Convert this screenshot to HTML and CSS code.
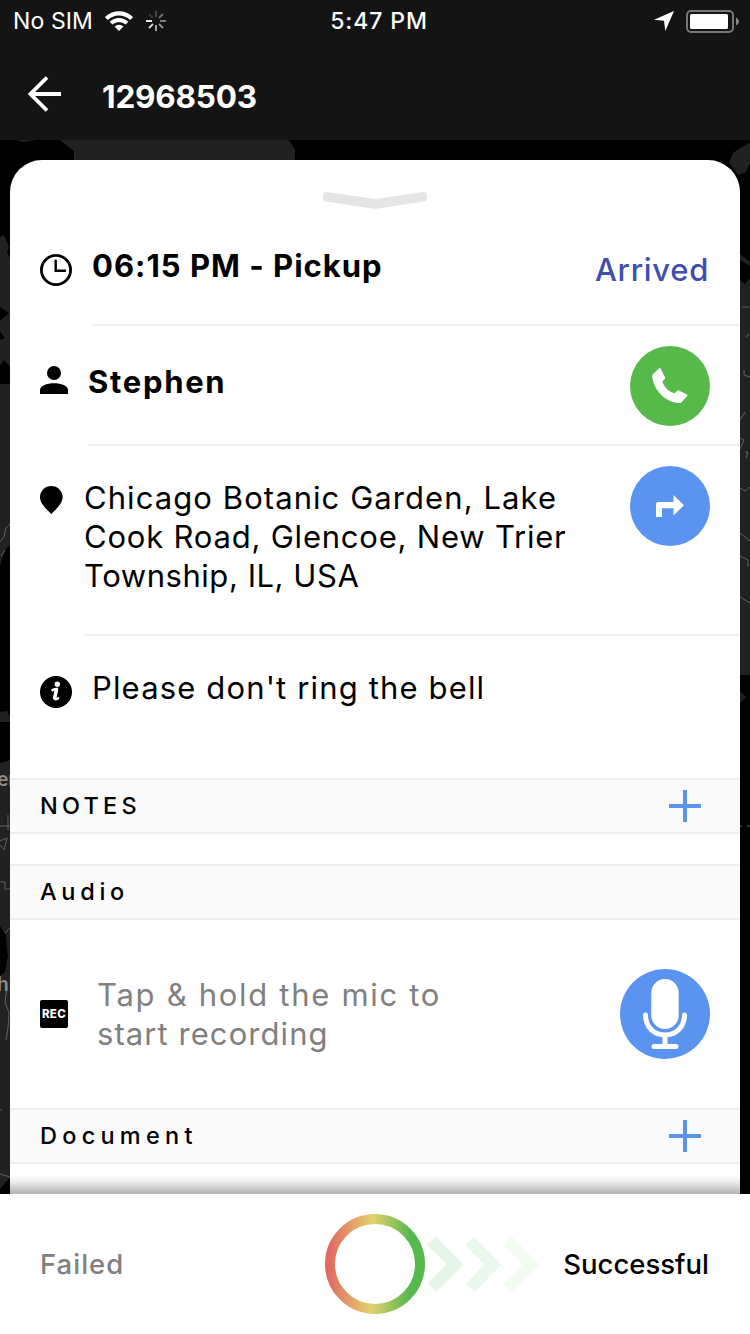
FILE: index.html
```html
<!DOCTYPE html>
<html lang="en">
<head>
<meta charset="utf-8">
<title>Pickup 12968503</title>
<link rel="stylesheet" href="styles.css">
</head>
<body>
<div class="screen">
  <header class="top">
    <div class="status">
      <div class="status-left">
        <span class="carrier">No SIM</span>
        <svg class="wifi" width="28" height="20" viewBox="0 0 28 20"><g fill="none" stroke="#fff" stroke-width="4"><path d="M1.400 7.600A17.800 17.800 0 0 1 26.600 7.600" stroke-width="4.200"/><path d="M6 12.200A11.300 11.300 0 0 1 22 12.200"/></g><path d="M14 20L9.600 15.600A6.200 6.200 0 0 1 18.400 15.600Z" fill="#fff"/></svg>
        <svg class="spinner" width="20" height="20" viewBox="-10 -10 20 20"><g stroke="#fff" stroke-width="1.800"><path d="M-4-0H-10"/><path d="M-3 3L-7 7" opacity=".85"/><path d="M0 4V10" opacity=".7"/><path d="M3 3L7 7" opacity=".55"/><path d="M4 0H10" opacity=".5"/><path d="M3-3L7-7" opacity=".4"/><path d="M0-4V-10" opacity=".25"/><path d="M-3-3L-7-7" opacity=".15"/></g></svg>
      </div>
      <span class="clock">5:47 PM</span>
      <div class="status-right">
        <svg width="20" height="20" viewBox="0 0 20 20"><path d="M20 0L11.300 20L10 9.800L0 8.700Z" fill="#fff"/></svg>
        <svg width="53" height="23" viewBox="0 0 53 23"><rect x="1" y="1" width="46" height="21" rx="4" fill="none" stroke="#777" stroke-width="2"/><rect x="4" y="4" width="38" height="15" rx="1.500" fill="#fff"/><path d="M50 7.500Q53 9 53 11.500T50 15.500Z" fill="#888"/></svg>
      </div>
    </div>
    <div class="navbar">
      <svg width="34" height="36" viewBox="0 0 34 36"><path d="M33 18H3M19 1.500L2.500 18L19 34.500" fill="none" stroke="#fff" stroke-width="3.800"/></svg>
      <h1 class="title">12968503</h1>
    </div>
  </header>

  <main class="stage">
    <svg class="map" width="750" height="1054" viewBox="0 140 750 1054">
      <rect y="140" width="750" height="1054" fill="#000"/>
      <g fill="#212121">
        <path d="M60 140L74 151V162H295V150L289 140ZM17 140L22 142L36 140Z"/>
        <path d="M750 143L742 147L733 153L729 162L738 175L746 172L750 163Z"/>
        <path d="M0 237L4 235L9 247L7 252L10 258V366L4 360L0 365V340L5 338L0 331V321L9 313L0 307ZM0 384H10V545L5 550L0 566ZM0 712L7 711L10 717V722H0ZM0 763L10 760V965L7 950L6 935L0 926ZM0 976L5 972L8 955L10 960V1178L4 1184L0 1189Z"/>
        <path d="M740 254L750 262V266L740 260ZM740 280L745 284L750 278V675H740ZM740 691L746 697L740 703Z"/>
      </g>
      <path d="M0 542L4 537L6 528L10 524M1 556L5 550M0 826H10M8 815V830M0 841L7 838L4 850L0 845M0 882H5V889H10M10 928L5 933M7 987L5 1002L9 1013L8 1028L6 1040M0 1110H2M0 1174L10 1177M742 307H749M749 334L746 338M744 370V375L750 377M740 420L745 412M740 438L744 440L740 449M745 452H748L746 458M740 488L745 491L750 487M740 533L750 541M740 556L748 560V567M740 597L750 603M740 826H742M747 826H750" fill="none" stroke="#626262"/>
      <g class="map-label" fill="#8b8b8b"><text x="-3" y="786">er</text><text x="-3" y="991">hi</text></g>
    </svg>

    <section class="sheet">
      <div class="handle"><svg width="106" height="18" viewBox="0 0 106 18"><path d="M4 1Q1 1 1 4V8Q1 10 4 10.500L53 18L102 10.500Q105 10 105 8V4Q105 1 102 1L53 8Z" fill="#e5e5e5"/></svg></div>

      <div class="row">
        <svg class="icon icon-clock" width="32" height="32" viewBox="0 0 32 32"><circle cx="16" cy="16" r="14.600" fill="none" stroke="#000" stroke-width="2.800"/><path d="M15.700 6.700V16.700H25" fill="none" stroke="#000" stroke-width="2.400" stroke-linecap="round"/></svg>
        <div class="body body-time"><span class="strong time">06:15 PM - Pickup</span><span class="arrived">Arrived</span></div>
      </div>

      <div class="row">
        <svg class="icon icon-person" width="28" height="28" viewBox="0 0 28 28"><circle cx="14" cy="7" r="7"/><path d="M0 28V24C0 19.500 7 17.200 14 17.200S28 19.500 28 24V28Z"/></svg>
        <div class="body body-name"><span class="strong name">Stephen</span>
          <span class="round call"><svg width="36" height="36" viewBox="0 0 36 36"><path d="M8.500 .2L13 9.300Q13.400 10.300 12.500 11.300L10.300 13.700Q12 18.500 15.500 21.500T22.500 25.300L25.200 22.800Q26 22 27 22.500L35 26.500Q35.700 27 35.200 27.900L29.500 34.300Q28.900 35 28 35C21 35.500 13 31.500 7.500 25C2.500 19 .3 13 .2 7.300Q.3 6.700 .8 6.300L7.200 .2Q8 -.3 8.500 .2Z" fill="#fff"/></svg></span>
        </div>
      </div>

      <div class="row row-address">
        <svg class="icon icon-pin" width="24" height="28" viewBox="0 0 24 28"><path d="M11.300 28C8 24.500 0 18 0 11.300A11.300 11.300 0 0 1 22.600 11.300C22.600 18 14.600 24.500 11.300 28Z"/></svg>
        <div class="body body-address"><p class="plain address"><span class="line l1">Chicago Botanic Garden, Lake</span><span class="line l2">Cook Road, Glencoe, New Trier</span><span class="line l3">Township, IL, USA</span></p>
          <span class="round route"><svg width="28" height="22" viewBox="0 0 28 22"><path d="M0 22V9Q0 7 2 7H17.500V0L28 10.200L17.500 20.500V13.200H6V22Z" fill="#fff"/></svg></span>
        </div>
      </div>

      <div class="row row-info">
        <svg class="icon icon-info" width="32" height="32" viewBox="0 0 32 32"><circle cx="16" cy="16" r="16"/><circle cx="17.300" cy="8.300" r="2.700" fill="#fff"/><path d="M11.500 14.800Q14 12.900 16.800 13L14.700 22.500Q14.500 24.500 19 21.800" fill="none" stroke="#fff" stroke-width="2.400"/><path d="M16.500 13L14.500 23" stroke="#fff" stroke-width="3.600"/></svg>
        <div class="body body-info"><span class="plain info">Please don't ring the bell</span></div>
      </div>

      <div class="section"><h2 class="section-title notes">NOTES</h2><span class="plus"></span></div>
      <div class="section section-audio"><h2 class="section-title audio">Audio</h2></div>
      <div class="recorder">
        <span class="rec">REC</span>
        <p class="plain hint"><span class="line h1">Tap &amp; hold the mic to</span><span class="line h2">start recording</span></p>
        <span class="mic"><svg width="90" height="90" viewBox="0 0 90 90"><circle cx="45" cy="45" r="45" fill="#5a93f0"/><rect x="31.300" y="10" width="27.400" height="50" rx="13.700" fill="#fff"/><path d="M25.500 46C25.500 58 34 66 45 66S64.500 58 64.500 46M45 67V77M34 77.500H56" fill="none" stroke="#fff" stroke-width="5" stroke-linecap="round"/></svg></span>
      </div>
      <div class="section"><h2 class="section-title document">Document</h2><span class="plus"></span></div>
      <div class="fade"></div>
    </section>
  </main>

  <footer class="footer">
    <span class="failed">Failed</span>
    <svg class="slider" width="216" height="100" viewBox="0 0 216 100"><defs><linearGradient id="ring" gradientUnits="userSpaceOnUse" x1="0" y1="49" x2="100" y2="51"><stop offset=".03" stop-color="#e26862"/><stop offset=".47" stop-color="#e2d26d"/><stop offset=".85" stop-color="#56b94c"/></linearGradient></defs><circle cx="50" cy="50" r="45" fill="#fff" stroke="url(#ring)" stroke-width="10"/><g fill="none" stroke-width="12"><path d="M106.500 26.500L130 50.500L107 73.500" stroke="#e5f6e8"/><path d="M144.500 27L168 50.500L145 74" stroke="#eaf9ee"/><path d="M182.500 27L206 50.500L183 74" stroke="#f3fbf2"/></g></svg>
    <span class="successful">Successful</span>
  </footer>
</div>
</body>
</html>
```

FILE: styles.css
```css
* { box-sizing: border-box; }
body { margin: 0; background: #000; font-family: Inter, "Open Sans", sans-serif; color: #000; }
h1, h2, p { margin: 0; }
svg { display: block; flex: none; }
.screen { width: 750px; height: 1334px; display: flex; flex-direction: column; overflow: hidden; white-space: nowrap; }

.top { height: 140px; background: #141414; color: #fff; }
.status { height: 40px; display: grid; grid-template-columns: 1fr auto 1fr; align-items: center; padding: 2px 11px 0 13px; font-size: 23px; line-height: 38px; }
.status-left, .status-right { display: flex; align-items: center; }
.carrier { width: 80px; letter-spacing: .1px; }
.wifi { margin-left: 12px; }
.spinner { margin-left: 13px; }
.clock { font-weight: 500; letter-spacing: .9px; padding-left: 6px; }
.status-right { justify-content: flex-end; gap: 12px; }
.navbar { height: 100px; padding: 36px 28px 0; display: flex; gap: 40px; align-items: flex-start; }
.title { font-size: 31.500px; line-height: 41px; font-weight: 700; letter-spacing: -.2px; }

.stage { height: 1054px; position: relative; padding: 20px 10px 0; }
.map { position: absolute; left: 0; top: 0; }
.map-label { font: 500 21px Roboto, sans-serif; }
.sheet { position: relative; height: 1034px; background: #fff; border-radius: 32px 32px 0 0; overflow: hidden; display: flex; flex-direction: column; }
.handle { height: 46px; padding-top: 31px; display: flex; justify-content: center; }
.row { height: 120px; display: flex; padding-left: 30px; gap: 20px; }
.row-address { height: 190px; }
.row-info { height: 142px; }
.body { flex: 1; display: flex; justify-content: space-between; align-items: flex-start; border-bottom: 2px solid #f0f0f0; padding-right: 30px; }
.body-info { border-bottom: 0; padding-top: 32px; }
.body-time { padding: 40px 31px 0 0; }
.body-name { padding-top: 20px; }
.body-address { padding-top: 20px; }
.icon-clock { margin-top: 48px; }
.icon-person { margin-top: 40px; }
.icon-pin { margin-top: 40px; }
.icon-info { margin-top: 40px; }
.strong { font-size: 31px; line-height: 40px; font-weight: 700; }
.time { letter-spacing: 1px; }
.name { padding-top: 16px; letter-spacing: 1.700px; }
.arrived { font-size: 31px; line-height: 48px; font-weight: 500; color: #404fae; letter-spacing: .7px; }
.plain { font-size: 31px; line-height: 39px; font-weight: 400; }
.line { display: block; }
.address { padding-top: 12px; }
.l1 { letter-spacing: 1.070px; }
.l2 { letter-spacing: .790px; }
.l3 { letter-spacing: .550px; }
.info { letter-spacing: 1.150px; }
.h1 { letter-spacing: 1.700px; }
.h2 { letter-spacing: 1.070px; }
.round { width: 80px; height: 80px; border-radius: 50%; display: flex; align-items: center; justify-content: center; }
.call { background: #56b949; }
.route { background: #5a93f0; }

.section { height: 56px; flex: none; display: flex; align-items: center; justify-content: space-between; border-top: 2px solid #eee; border-bottom: 2px solid #eee; background: #fafafa; padding: 0 39px 0 30px; }
.section-audio { margin-top: 30px; }
.section-title { font-size: 23.500px; line-height: 52px; font-weight: 500; }
.notes { letter-spacing: 4.200px; }
.audio { letter-spacing: 4.700px; }
.document { letter-spacing: 5.250px; }
.plus { width: 32px; height: 32px; background: linear-gradient(#5a93f0, #5a93f0) center / 4px 32px no-repeat, linear-gradient(#5a93f0, #5a93f0) center / 32px 4px no-repeat; }
.recorder { height: 188px; display: flex; align-items: center; padding: 0 30px; }
.rec { width: 28px; height: 28px; border-radius: 2px; background: #000; color: #fff; font-size: 11.500px; line-height: 28px; font-weight: 800; text-align: center; letter-spacing: .3px; }
.hint { margin-left: 29px; color: #808080; }
.mic { margin-left: auto; }
.fade { height: 30px; background: linear-gradient(rgba(0,0,0,0) 35%, rgba(0,0,0,.05) 55%, rgba(0,0,0,.3)); }

.footer { height: 140px; background: #fff; display: grid; grid-template-columns: 285px 216px 1fr; align-items: center; padding: 0 41px 0 40px; font-size: 27.500px; font-weight: 500; }
.failed { color: #808080; letter-spacing: 1px; }
.successful { text-align: right; }
```
